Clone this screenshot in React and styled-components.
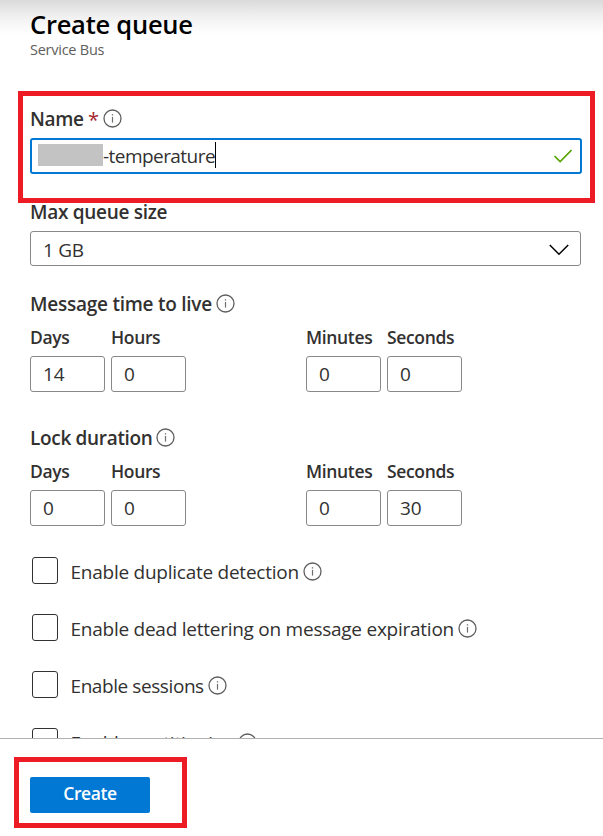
import React from "react";
import styled, { createGlobalStyle } from "styled-components";

const GlobalStyle = createGlobalStyle`
  *, *::before, *::after { box-sizing: border-box; }
  body {
    margin: 0;
    background: #fff;
    color: #323130;
    font-family: "Open Sans", "Noto Sans", sans-serif;
  }
`;

const Blade = styled.div`
  position: relative;
  display: flex;
  flex-direction: column;
  width: 603px;
  height: 836px;
  overflow: hidden;
  background: #fff;
`;

const Body = styled.main`
  height: 738px;
  padding: 8px 21px 0 30px;
  overflow: hidden;
  background: linear-gradient(#dadada 0, #f0f0f0 16px, #fff 34px);
`;

const Title = styled.h1`
  margin: 0;
  font-size: 25.5px;
  line-height: 32px;
  font-weight: 600;
  letter-spacing: -0.25px;
  color: #000;
`;

const Subtitle = styled.p`
  margin: 0 0 47px;
  font-size: 14.5px;
  line-height: 20px;
  letter-spacing: -0.25px;
  color: #605e5c;
`;

const LabelRow = styled.div`
  display: flex;
  align-items: center;
  height: 24px;
  margin-bottom: ${(p) => p.$gap}px;
`;

const Label = styled.label`
  font-size: 19px;
  line-height: 24px;
  font-weight: 600;
  letter-spacing: ${(p) => p.$track || 0}px;
  white-space: nowrap;
`;

const Required = styled.span`
  width: 11px;
  margin: 1px 5px 0 4.5px;
  font-size: 20px;
  line-height: 22px;
  font-weight: 500;
  color: #a4262c;
`;

const TextBox = styled.div`
  display: flex;
  align-items: center;
  width: 552px;
  height: 36px;
  margin-bottom: 26px;
  padding: 0 8px 0 6px;
  border: 2px solid #0078d4;
  border-radius: 3px;
  background: #fff;
`;

const Redaction = styled.span`
  width: 65px;
  height: 22px;
  margin-top: -2px;
  background: #c3c3c3;
`;

const TypedText = styled.span`
  font-size: 19px;
  line-height: 24px;
  letter-spacing: -0.55px;
  margin-top: -1px;
`;

const Caret = styled.span`
  width: 1px;
  height: 26px;
  margin: -2px auto 0 0;
  background: #000;
`;

const Select = styled.div`
  display: flex;
  align-items: center;
  justify-content: space-between;
  width: 551px;
  height: 35px;
  margin-bottom: 26px;
  padding: 2px 11px 0 12px;
  border: 1px solid #8a8886;
  border-radius: 3px;
  font-size: 19px;
  line-height: 24px;
  letter-spacing: -0.3px;
`;

const TimeGrid = styled.div`
  display: grid;
  grid-template-columns: 75px 189px 75px 75px;
  column-gap: 6px;
  margin-bottom: ${(p) => p.$after}px;
`;

const TimeField = styled.div`
  display: flex;
  flex-direction: column;
  gap: 9px;
  width: 75px;
`;

const TimeLabel = styled.label`
  font-size: 17.5px;
  line-height: 20px;
  font-weight: 600;
  letter-spacing: -0.35px;
`;

const TimeBox = styled.div`
  height: 36px;
  padding: 0 0 0 12px;
  border: 1px solid #8a8886;
  border-radius: 3px;
  font-size: 19px;
  line-height: 34px;
`;

const CheckList = styled.div`
  display: flex;
  flex-direction: column;
  gap: 30px;
  padding-left: 2px;
`;

const CheckRow = styled.div`
  display: flex;
  align-items: center;
  height: 27px;
`;

const CheckBox = styled.span`
  width: 26px;
  height: 27px;
  margin-right: 12.5px;
  border: 1px solid #323130;
  border-radius: 3px;
`;

const CheckText = styled.span`
  margin-top: 2px;
  font-size: 19px;
  line-height: 24px;
  letter-spacing: ${(p) => p.$track}px;
  white-space: nowrap;
`;

const InfoSvg = styled.svg`
  flex: none;
  margin: ${(p) => p.$top}px 0 0 ${(p) => p.$left}px;
`;

const Footer = styled.footer`
  height: 98px;
  padding: 38px 30px 0;
  border-top: 1px solid #b3b1af;
  background: #fff;
`;

const CreateButton = styled.button`
  display: block;
  width: 120px;
  height: 36px;
  padding: 0 0 3px;
  border: 0;
  border-radius: 2px;
  background: #0078d4;
  color: #fff;
  font: 600 17.5px/33px "Open Sans", "Noto Sans", sans-serif;
  letter-spacing: -0.4px;
`;

const Highlight = styled.div`
  position: absolute;
  left: ${(p) => p.$x}px;
  top: ${(p) => p.$y}px;
  width: ${(p) => p.$w}px;
  height: ${(p) => p.$h}px;
  border: 5px solid #ed1c24;
  pointer-events: none;
`;

function Info({ left = 4, top = -1 }) {
  return (
    <InfoSvg width="19" height="19" viewBox="0 0 19 19" $left={left} $top={top} fill="none">
      <circle cx="9.5" cy="9.5" r="8.5" stroke="#605e5c" strokeWidth="1.3" />
      <path d="M9.5 7.9V13.6" stroke="#706e6c" strokeWidth="1.2" />
      <path d="M9.5 5.2V6.5" stroke="#706e6c" strokeWidth="1.3" />
    </InfoSvg>
  );
}

function Duration({ values, after }) {
  return (
    <TimeGrid $after={after}>
      {["Days", "Hours", "Minutes", "Seconds"].map((unit, i) => (
        <TimeField key={unit}>
          <TimeLabel>{unit}</TimeLabel>
          <TimeBox>{values[i]}</TimeBox>
        </TimeField>
      ))}
    </TimeGrid>
  );
}

const options = [
  { text: "Enable duplicate detection", track: -0.25 },
  { text: "Enable dead lettering on message expiration", track: -0.25 },
  { text: "Enable sessions", track: -0.42 },
  { text: "Enable partitioning", track: -0.2 },
];

export default function App() {
  return (
    <Blade>
      <GlobalStyle />
      <Body>
        <Title>Create queue</Title>
        <Subtitle>Service Bus</Subtitle>

        <LabelRow $gap={7}>
          <Label $track={-0.35}>Name</Label>
          <Required>*</Required>
          <Info left={-1} />
        </LabelRow>
        <TextBox>
          <Redaction />
          <TypedText>-temperature</TypedText>
          <Caret />
          <svg width="18" height="14" viewBox="0 0 18 14" fill="none">
            <path d="M0.5 7L6.2 12.5L17.5 1" stroke="#57a300" strokeWidth="1.6" />
          </svg>
        </TextBox>

        <LabelRow $gap={7}>
          <Label $track={-0.3}>Max queue size</Label>
        </LabelRow>
        <Select>
          1 GB
          <svg width="20" height="12" viewBox="0 0 20 12" fill="none">
            <path d="M0.8 1L10 10.2L19.2 1" stroke="#000" strokeWidth="1.5" />
          </svg>
        </Select>

        <LabelRow $gap={11}>
          <Label $track={-0.25}>Message time to live</Label>
          <Info left={4.5} />
        </LabelRow>
        <Duration values={[14, 0, 0, 0]} after={34} />

        <LabelRow $gap={11}>
          <Label $track={-0.32}>Lock duration</Label>
          <Info left={3.5} />
        </LabelRow>
        <Duration values={[0, 0, 0, 30]} after={31} />

        <CheckList>
          {options.map(({ text, track }) => (
            <CheckRow key={text}>
              <CheckBox />
              <CheckText $track={track}>{text}</CheckText>
              <Info left={4} top={2} />
            </CheckRow>
          ))}
        </CheckList>
      </Body>
      <Footer>
        <CreateButton>Create</CreateButton>
      </Footer>
      <Highlight $x={18} $y={91} $w={577} $h={112} />
      <Highlight $x={14} $y={757} $w={173} $h={71} />
    </Blade>
  );
}
